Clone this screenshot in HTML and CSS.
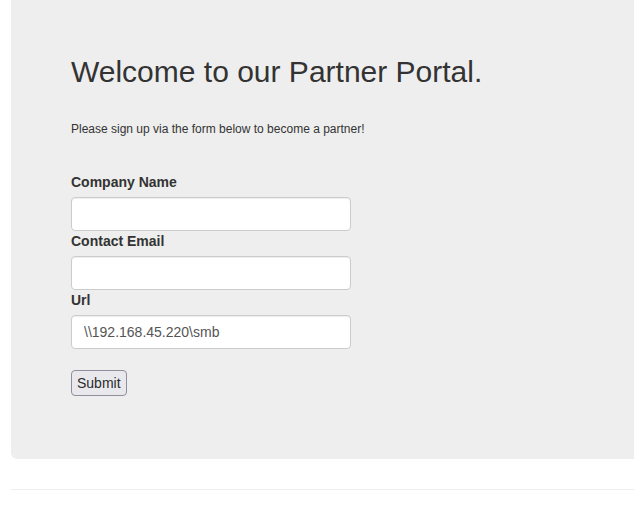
FILE: index.html
```html
<!DOCTYPE html>
<html>
<head>
<meta charset="utf-8">
<link rel="stylesheet" href="styles.css">
</head>
<body>
<div class="container">
  <div class="jumbotron">
    <h1 class="title">Welcome to our Partner Portal.</h1>
    <p class="lead">Please sign up via the form below to become a partner!</p>
    <form class="form">
      <div class="field">
        <label class="label">Company Name</label>
        <input class="input" type="text">
      </div>
      <div class="field">
        <label class="label">Contact Email</label>
        <input class="input" type="text">
      </div>
      <div class="field">
        <label class="label">Url</label>
        <input class="input" type="text" value="\\192.168.45.220\smb">
      </div>
      <button class="submit" type="button">Submit</button>
    </form>
  </div>
  <hr class="rule">
</div>
</body>
</html>
```
FILE: styles.css
```css
html, body {
  margin: 0;
  padding: 0;
  background: #fff;
  overflow: hidden;
}
body {
  font-family: "Liberation Sans", Arial, sans-serif;
  font-size: 14px;
  line-height: 1.42857;
  color: #333;
}
.container {
  margin-left: 11px;
  width: 700px;
}
.jumbotron {
  background: #eee;
  border-radius: 0 0 6px 6px;
  padding: 55px 60px 63px;
}
.title {
  margin: 0;
  font-size: 30px;
  font-weight: 400;
  line-height: 1.1;
  color: #333;
}
.lead {
  margin: 33px 0 0;
  font-size: 12px;
}
.form {
  margin-top: 35px;
}
.field {
  display: flex;
  flex-direction: column;
  align-items: flex-start;
}
.label {
  font-weight: 700;
  margin-bottom: 4px;
}
.input {
  box-sizing: border-box;
  width: 280px;
  height: 34px;
  padding: 6px 12px;
  font-family: inherit;
  font-size: 14px;
  color: #555;
  background: #fff;
  border: 1px solid #ccc;
  border-radius: 4px;
  box-shadow: inset 0 1px 1px rgba(0,0,0,.075);
  margin: 0 0 1px;
}
.submit {
  margin-top: 20px;
  font-family: inherit;
  font-size: 14px;
  color: #2b2b2b;
  background: #e9e9ed;
  border: 1px solid #8f8f9d;
  border-radius: 4px;
  padding: 3px 5px;
  height: 26px;
}
.rule {
  margin: 30px 0 0;
  border: 0;
  border-top: 1px solid #eee;
}
```
